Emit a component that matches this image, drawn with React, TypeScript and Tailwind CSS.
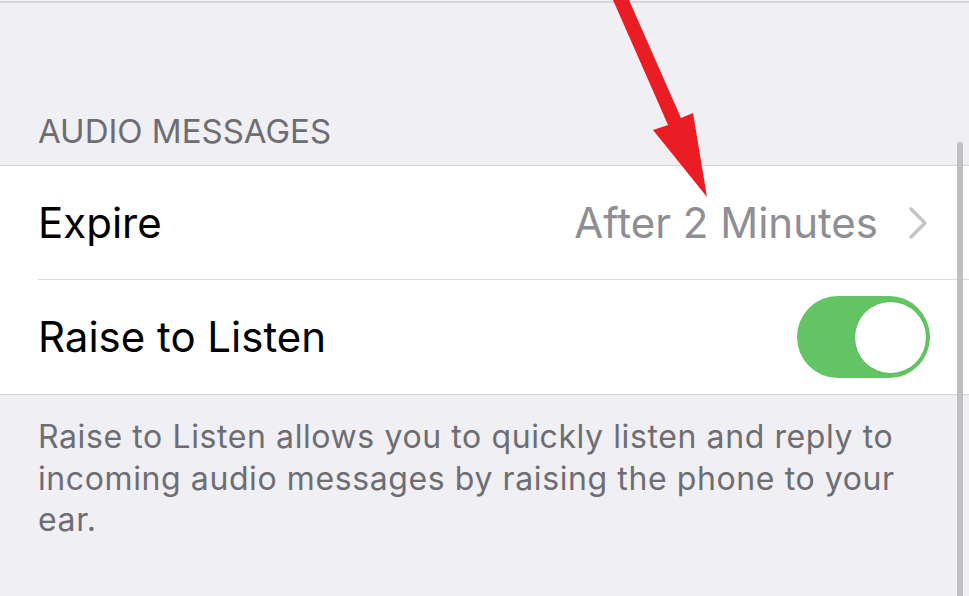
import React from "react";

export default function App() {
  const font = { fontFamily: "Inter, 'Noto Sans', 'Liberation Sans', sans-serif" };
  return (
    <div className="relative w-[969px] h-[596px] overflow-hidden bg-[#efeff4]" style={font}>
      <div className="pt-[1px]">
        <div className="border-t-[2px] border-[#d6d6da]" />
      </div>
      {/* header */}
      <div className="h-[162px] flex items-end pl-[38px] pb-[17px]">
        <span className="text-[33px] leading-none text-[#6d6d72] tracking-[0px]">AUDIO MESSAGES</span>
      </div>
      {/* group */}
      <div className="bg-white border-t-[1.5px] border-b-[1.5px] border-[#d2d2d6]">
        <div className="flex items-center h-[114px] pl-[38px]">
          <div className="flex items-center flex-1 h-full border-b-[1.5px] border-[#dcdce0]">
            <span className="text-[42px] leading-none text-black">Expire</span>
            <span className="ml-auto text-[42px] leading-none text-[#8e8e93]">After 2 Minutes</span>
            <svg width="22" height="34" viewBox="0 0 22 34" className="ml-[29px] mr-[40px]">
              <path d="M4 3 L18 17 L4 31" fill="none" stroke="#c4c4c7" strokeWidth="3.5" strokeLinecap="round" strokeLinejoin="round" />
            </svg>
          </div>
        </div>
        <div className="flex items-center h-[114px] pl-[38px]">
          <span className="text-[42px] leading-none text-black">Raise to Listen</span>
          <div className="ml-auto mr-[39px] w-[133px] h-[82px] rounded-full bg-[#62c462] flex items-center justify-end pr-[3px]">
            <div className="w-[73px] h-[73px] rounded-full bg-white border-[1.5px] border-[#58b858]" />
          </div>
        </div>
      </div>
      {/* footer */}
      <div className="pl-[38px] pt-[21px]">
        <p className="w-[875px] text-[32px] leading-[41.5px] text-[#6d6d72] tracking-[0.6px]">
          Raise to Listen allows you to quickly listen and reply to incoming audio messages by raising the phone to your ear.
        </p>
      </div>
      {/* scrollbar */}
      <div className="absolute left-[957px] top-[142px] w-[6px] h-[470px] rounded-full bg-[#bfbfc1]" />
      {/* red arrow */}
      <svg className="absolute left-0 top-0" width="969" height="596" viewBox="0 0 969 596">
        <polygon points="613,0 629,0 681,118 693,113 707,197 653,130 668,125" fill="#ea1d25" />
      </svg>
    </div>
  );
}
